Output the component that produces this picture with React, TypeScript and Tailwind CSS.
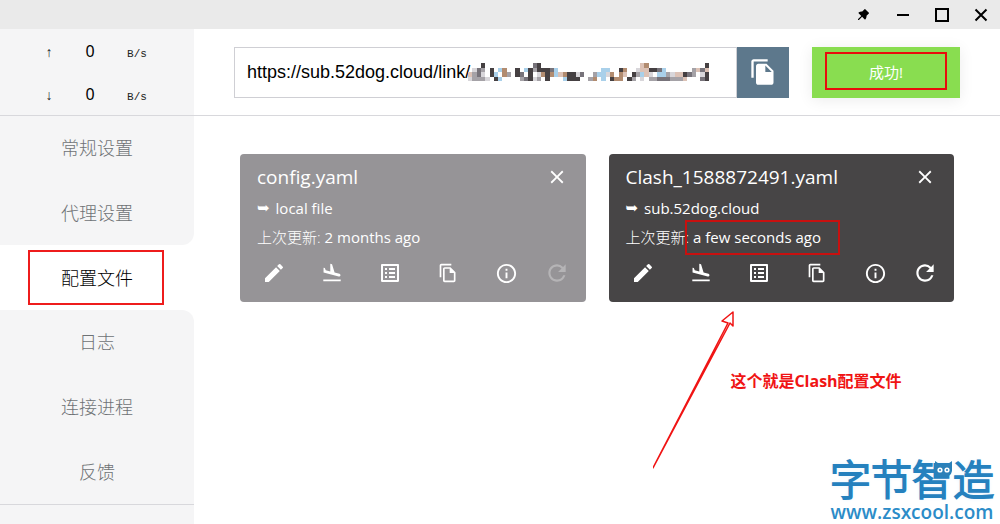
import type { ReactNode } from "react";
import { AiFillPushpin } from "react-icons/ai";
import {
  MdClose,
  MdEdit,
  MdFileCopy,
  MdFlightLand,
  MdInfoOutline,
  MdListAlt,
  MdOutlineFileCopy,
  MdRefresh,
} from "react-icons/md";

const navItems = ["常规设置", "代理设置", "配置文件", "日志", "连接进程", "反馈"];
const activeIndex = 2;

function WindowButton({ label, children }: { label: string; children: ReactNode }) {
  return (
    <button type="button" aria-label={label} className="flex w-[39px] items-center justify-center text-black">
      {children}
    </button>
  );
}

function TitleBar() {
  return (
    <header className="flex h-[29px] shrink-0 justify-end bg-[#eaeaea]">
      <WindowButton label="置顶">
        <AiFillPushpin className="size-[15px]" />
      </WindowButton>
      <WindowButton label="最小化">
        <svg width="14" height="14" viewBox="0 0 14 14">
          <path d="M1 7h12" stroke="currentColor" strokeWidth="2" />
        </svg>
      </WindowButton>
      <WindowButton label="最大化">
        <svg width="14" height="14" viewBox="0 0 14 14">
          <rect x="1" y="1" width="12" height="12" fill="none" stroke="currentColor" strokeWidth="2" />
        </svg>
      </WindowButton>
      <WindowButton label="关闭">
        <svg width="14" height="14" viewBox="0 0 14 14">
          <path d="M1.5 1.5l11 11M12.5 1.5l-11 11" stroke="currentColor" strokeWidth="2" />
        </svg>
      </WindowButton>
    </header>
  );
}

function TrafficRow({ arrow }: { arrow: string }) {
  return (
    <div className="flex h-[43px] items-baseline pt-[10px] pl-[34px] text-[#222]">
      <span className="w-[30px] text-center font-['Liberation_Mono',monospace] text-sm">{arrow}</span>
      <span className="w-[52px] text-center font-['Noto_Sans',sans-serif] text-base text-black">0</span>
      <span className="w-[42px] text-center font-['Liberation_Mono',monospace] text-[11px]">B/s</span>
    </div>
  );
}

function Sidebar() {
  return (
    <aside className="flex w-[194px] shrink-0 flex-col">
      <div className="border-b border-[#d8d8dc] bg-[#f5f5f6]">
        <TrafficRow arrow="↑" />
        <TrafficRow arrow="↓" />
      </div>
      <nav className="flex flex-1 flex-col">
        {navItems.map((item, i) => {
          const shape =
            i === activeIndex
              ? "bg-white text-black"
              : i === activeIndex - 1
                ? "rounded-br-xl bg-[#f5f5f6] text-[#6e7275]"
                : i === activeIndex + 1
                  ? "rounded-tr-xl bg-[#f5f5f6] text-[#6e7275]"
                  : "bg-[#f5f5f6] text-[#6e7275]";
          return (
            <a
              key={item}
              href={`#${i}`}
              className={`relative flex flex-1 items-center justify-center text-lg font-light ${shape}`}
            >
              {item}
              {i === activeIndex && (
                <span className="absolute inset-x-7 inset-y-[5px] mr-[2px] border-2 border-[#ee1c1c]" />
              )}
            </a>
          );
        })}
      </nav>
      <div className="h-5 border-t border-[#d8d8dc] bg-[#f5f5f6]" />
    </aside>
  );
}

const palette: Record<string, string> = {
  k: "#454042",
  d: "#77737a",
  g: "#a5a2a7",
  l: "#d8d6da",
  b: "#a9d0ea",
  t: "#b28c70",
  p: "#dcc2b6",
};

const mosaicRows = [
  "...k...........dk.......................pt.............k",
  ".ldg.k.bt..k.bkgkkkdb..........bb..kt..lppkkdb......gpdp",
  "pgdl.kb.tg.kd.k.ltktbptkkld..gbblt.tp.kgbpl.bbglppkdg.lk",
  "lgggl.kb....gdklg.k...bkkk..gt.b.ktt.kg.l.ggdddgggp...dk",
];

function Mosaic() {
  return (
    <svg
      aria-hidden="true"
      viewBox="0 0 56 4"
      preserveAspectRatio="none"
      shapeRendering="crispEdges"
      className="pointer-events-none absolute top-4 left-[234px] h-[18px] w-[241px]"
    >
      {mosaicRows.flatMap((row, y) =>
        row
          .split("")
          .map((c, x) => (c === "." ? null : <rect key={`${x}-${y}`} x={x} y={y} width="1" height="1" fill={palette[c]} />)),
      )}
    </svg>
  );
}

function DownloadBar() {
  return (
    <div className="flex h-[87px] items-center gap-[23px] border-b border-[#d8d8dc] px-10">
      <div className="flex h-[51px] min-w-0 flex-1">
        <div className="relative min-w-0 flex-1">
          <input
            type="text"
            aria-label="订阅链接"
            defaultValue="https://sub.52dog.cloud/link/"
            className="h-full w-full border border-[#cfcfd4] bg-white px-3 font-['Liberation_Sans',sans-serif] text-lg text-black outline-none"
          />
          <Mosaic />
        </div>
        <button type="button" aria-label="粘贴" className="flex w-[52px] items-center justify-center bg-[#5d788c] text-white">
          <MdFileCopy className="size-7" />
        </button>
      </div>
      <button
        type="button"
        className="relative h-[51px] w-[148px] bg-[#89dd50] text-[15px] text-white shadow-[0_2px_14px_rgba(0,0,0,0.08)]"
      >
        成功!
        <span className="absolute inset-x-[13px] top-[5px] bottom-2 border-2 border-[#e80c0c]" />
      </button>
    </div>
  );
}

function CardButton({ label, disabled, children }: { label: string; disabled?: boolean; children: ReactNode }) {
  return (
    <button
      type="button"
      aria-label={label}
      disabled={disabled}
      className="flex size-6 items-center justify-center disabled:opacity-30"
    >
      {children}
    </button>
  );
}

interface ProfileProps {
  name: string;
  source: string;
  updated: string;
  active?: boolean;
}

function ProfileCard({ name, source, updated, active }: ProfileProps) {
  return (
    <article className={`rounded px-[17px] pt-2 pb-[17px] text-white ${active ? "bg-[#474546]" : "bg-[#969497]"}`}>
      <div className="flex h-[30px] items-center justify-between">
        <h2 className="text-[19px]">{name}</h2>
        <CardButton label="删除">
          <MdClose className="size-[22px]" />
        </CardButton>
      </div>
      <p className="mt-0.5 flex h-[29px] items-center gap-1.5 text-[15px] font-medium">
        <span className="font-['DejaVu_Sans',sans-serif]">➥</span>
        {source}
      </p>
      <p className="flex h-[29px] items-center gap-1 text-[15px] font-medium">
        <span className="font-light">上次更新:</span>
        <span className="relative">
          {updated}
          {active && <span className="absolute -inset-x-2 -inset-y-[6px] -mr-[11px] border-2 border-[#c8100f]" />}
        </span>
      </p>
      <div className="mt-[9px] flex items-center gap-[26px] pl-[5px]">
        <div className="flex flex-1 items-center justify-between">
          <CardButton label="编辑">
            <MdEdit className="size-6" />
          </CardButton>
          <CardButton label="外部打开">
            <MdFlightLand className="size-[22px]" />
          </CardButton>
          <CardButton label="规则">
            <MdListAlt className="size-6" />
          </CardButton>
          <CardButton label="复制">
            <MdOutlineFileCopy className="size-5" />
          </CardButton>
          <CardButton label="信息">
            <MdInfoOutline className="size-[23px]" />
          </CardButton>
        </div>
        <CardButton label="更新" disabled={!active}>
          <MdRefresh className="size-[26px] shrink-0" />
        </CardButton>
      </div>
    </article>
  );
}

function Watermark() {
  return (
    <div className="absolute right-[6px] bottom-0 text-center text-[#2b8cc8]">
      <div className="relative font-['Noto_Sans_CJK_SC',sans-serif] text-[41px] leading-[46px] font-light text-[#2581be] [-webkit-text-stroke:2px_#2581be] [text-shadow:0_0_4px_#d5ebfa]">
        字节智造
        <svg className="absolute top-[7px] left-[104px]" width="19" height="17" viewBox="0 0 19 17">
          <path d="M1 0l5 3.500h7L18 0v10q-1 6-8.500 6T1 10z" fill="#2b80b8" />
          <circle cx="6" cy="9" r="2.600" fill="#fff" />
          <circle cx="13" cy="9" r="2.600" fill="#fff" />
          <circle cx="6" cy="9" r="1" fill="#2b80b8" />
          <circle cx="13" cy="9" r="1" fill="#2b80b8" />
        </svg>
      </div>
      <div className="font-['Open_Sans',sans-serif] text-[19px] leading-6 font-semibold">www.zsxcool.com</div>
    </div>
  );
}

export default function App() {
  return (
    <div className="flex min-h-screen flex-col bg-white font-['Open_Sans','Noto_Sans_CJK_SC',sans-serif]">
      <TitleBar />
      <div className="flex flex-1">
        <Sidebar />
        <main className="relative flex min-w-0 flex-1 flex-col">
          <DownloadBar />
          <section className="relative grid grid-cols-2 gap-[23px] px-[46px] pt-[38px]">
            <ProfileCard name="config.yaml" source="local file" updated="2 months ago" />
            <ProfileCard name="Clash_1588872491.yaml" source="sub.52dog.cloud" updated="a few seconds ago" active />
            <div className="absolute top-full left-[57%] text-[#f01414]">
              <svg className="mt-[9px]" width="84" height="158" viewBox="0 0 84 158" fill="none">
                <path
                  d="M0 157L75 12L69 10L80 1L80 15L77 12Z"
                  stroke="currentColor"
                  strokeWidth="1.500"
                  strokeLinejoin="round"
                />
              </svg>
              <strong className="absolute top-[67px] left-[77px] text-base whitespace-nowrap">这个就是Clash配置文件</strong>
            </div>
          </section>
          <Watermark />
        </main>
      </div>
    </div>
  );
}
